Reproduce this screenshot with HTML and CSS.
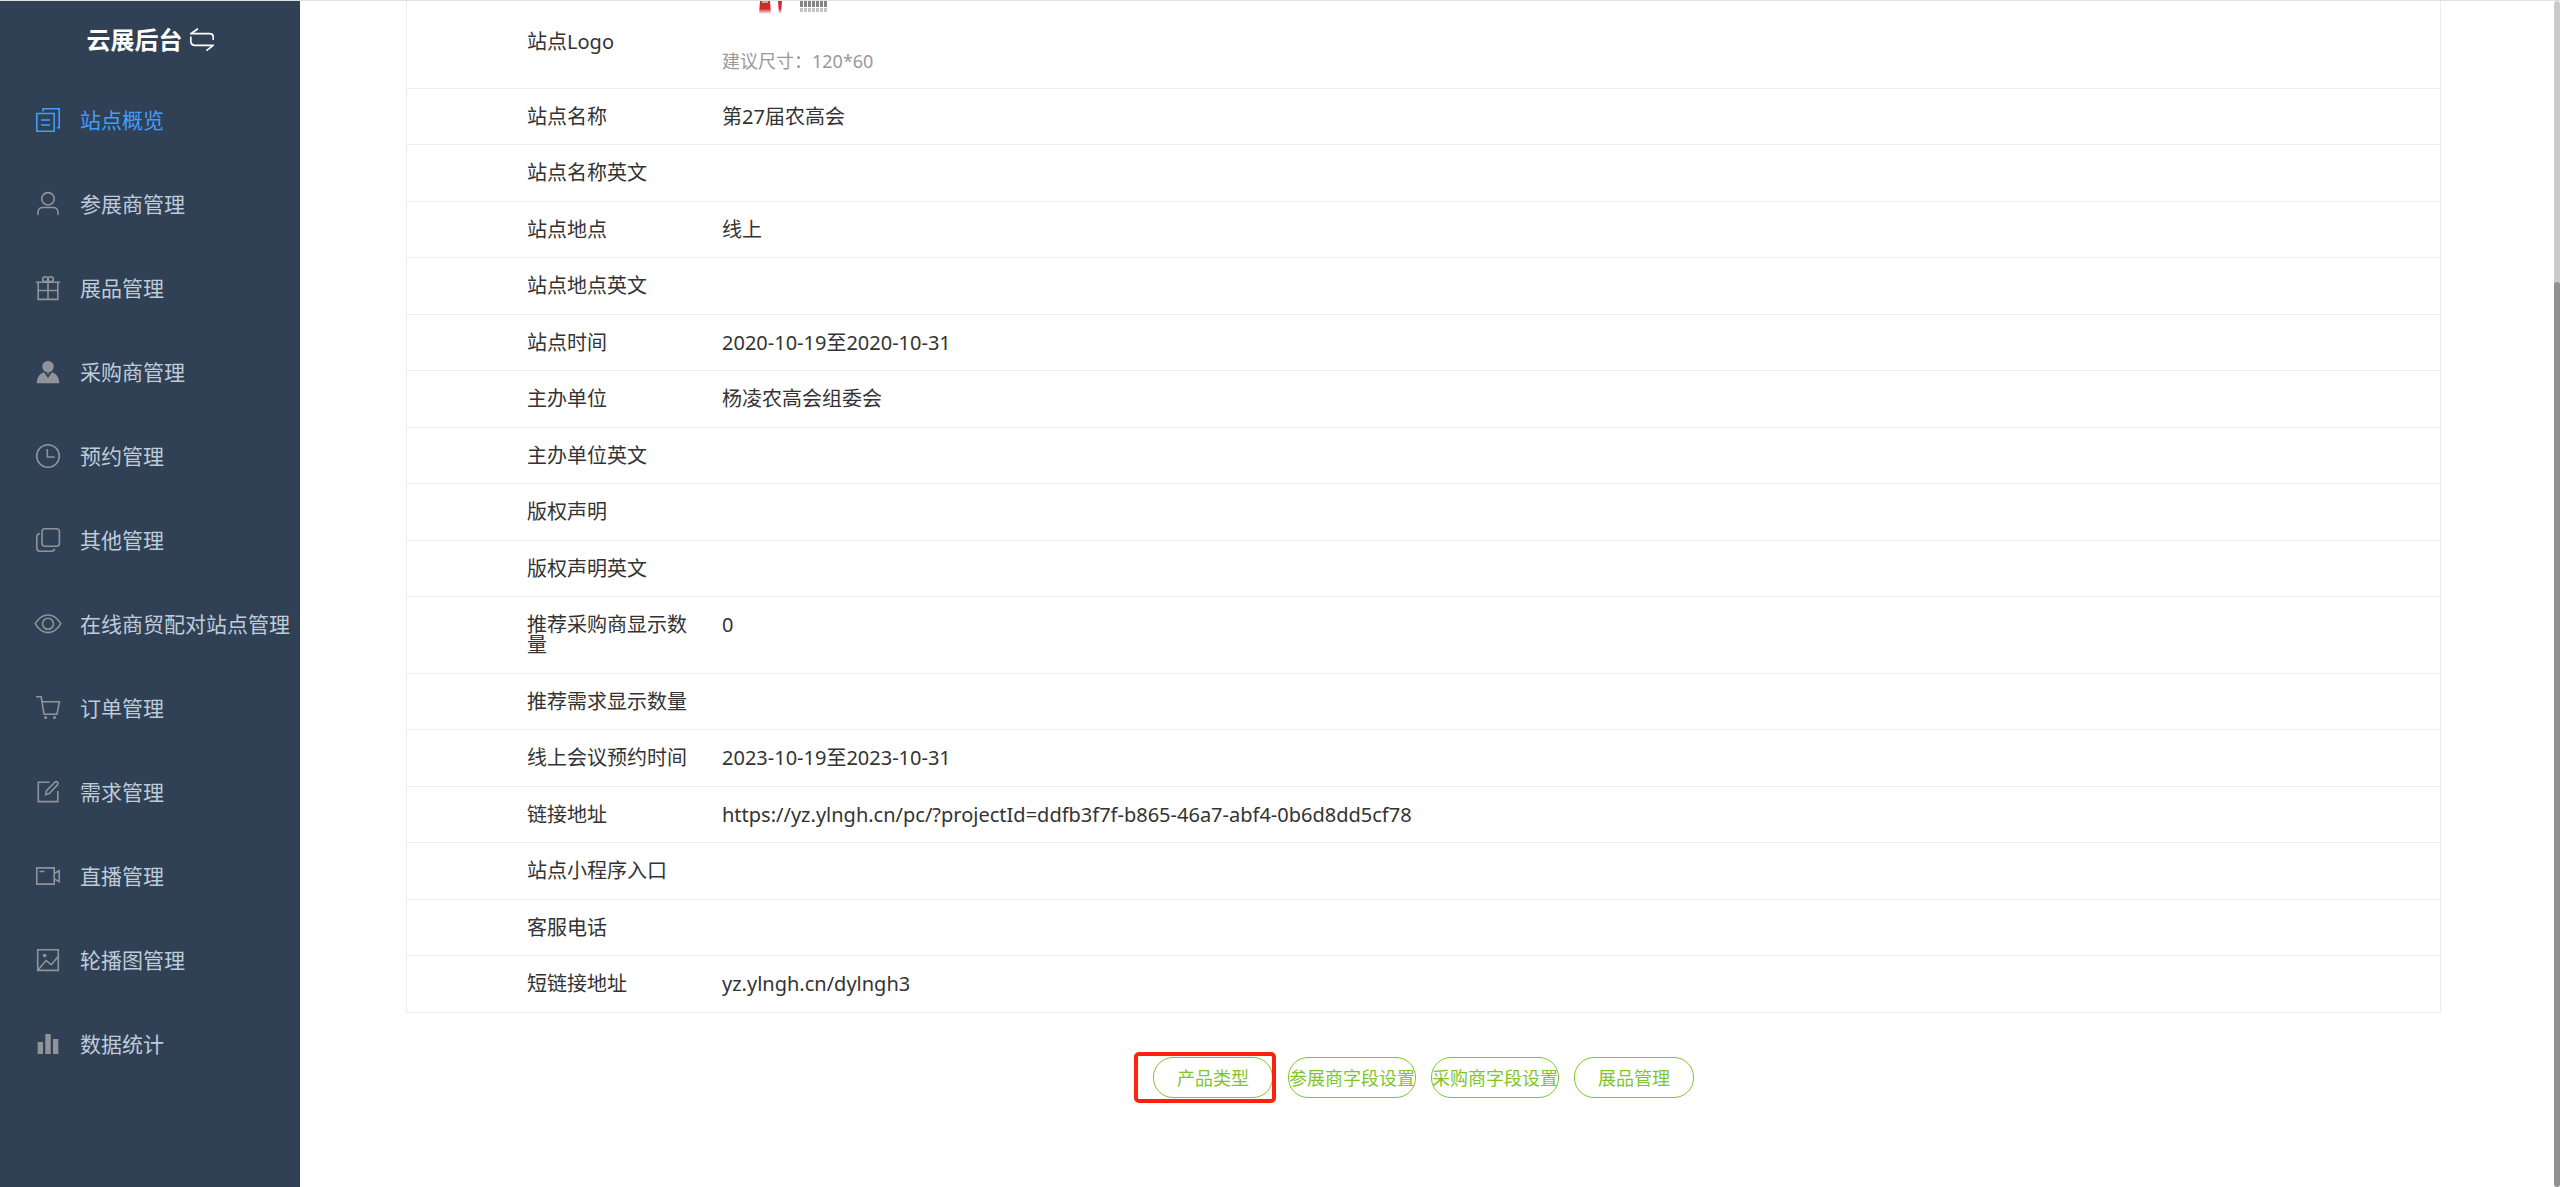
FILE: index.html
```html
<!DOCTYPE html>
<html lang="zh-CN">
<head>
<meta charset="utf-8">
<title>云展后台</title>
<link rel="stylesheet" href="styles.css">
</head>
<body>
<div class="layout">
  <nav class="sidebar" aria-label="主菜单">
    <h1 class="brand">云展后台
      <svg class="brand-icon" viewBox="0 0 24 24" aria-hidden="true"><path d="M8 .8 1 5.6h18.500q3.800 0 3.800 3.800V12M.8 8.500v4.600q0 4.300 4.300 4.300H23l-6.500 5.200"/></svg>
    </h1>
    <ul class="menu">
      <li><a class="menu-item active" href="#"><svg class="icon" viewBox="0 0 28 28"><path d="M2.800 7.500h17.400v17.700H2.800zM9 5.500V2.800h16.200v19H23M7 14h9M7 19h9"/></svg>站点概览</a></li>
      <li><a class="menu-item" href="#"><svg class="icon" viewBox="0 0 28 28"><circle cx="14" cy="8.800" r="6.200"/><path d="M4 25v-2.500q0-5 5-5h10q5 0 5 5V25"/></svg>参展商管理</a></li>
      <li><a class="menu-item" href="#"><svg class="icon" viewBox="0 0 28 28"><path d="M2 8.200h24M4.200 8.200v17.200h19.600V8.200M4.200 16.500h19.600M14 5v20.500"/><circle cx="11.300" cy="5.300" r="2.600"/><circle cx="16.700" cy="5.300" r="2.600"/></svg>展品管理</a></li>
      <li><a class="menu-item" href="#"><svg class="icon solid" viewBox="0 0 28 28"><circle cx="14" cy="8.600" r="5.700"/><path d="M10 14.300 14 20l4-5.700q7.300 2.500 7.300 10.900H2.700Q2.700 16.800 10 14.300zM12.500 14.800h3l-1.500 2z"/></svg>采购商管理</a></li>
      <li><a class="menu-item" href="#"><svg class="icon" viewBox="0 0 28 28"><circle cx="14" cy="14" r="11.300"/><path d="M13.300 7v8h7.500"/></svg>预约管理</a></li>
      <li><a class="menu-item" href="#"><svg class="icon" viewBox="0 0 28 28"><rect x="8" y="2.800" width="17.400" height="17.400" rx="3"/><path d="M6 7.800q-3.200 0-3.200 3V22q0 3.200 3.200 3.200h11.500q3 0 3-2.500"/></svg>其他管理</a></li>
      <li><a class="menu-item" href="#"><svg class="icon" viewBox="0 0 28 28"><path d="M1.200 13.700Q6.500 5 14 5t12.800 8.700Q21.500 22.600 14 22.600T1.200 13.700z"/><circle cx="14" cy="13.800" r="5.500"/></svg>在线商贸配对站点管理</a></li>
      <li><a class="menu-item" href="#"><svg class="icon" viewBox="0 0 28 28"><path d="M2 2.800h5.200L10 20.200h13l2.400-12.400H8.200"/><circle class="dot" cx="11.700" cy="23.600" r="1.500"/><circle class="dot" cx="20.500" cy="23.600" r="1.500"/></svg>订单管理</a></li>
      <li><a class="menu-item" href="#"><svg class="icon" viewBox="0 0 28 28"><path d="M15.500 4.200H4.300v19.400h19.500V13M11.700 16.700l.8-4L20.800 4.200q1.300-1.200 2.600 0t0 2.700L15.500 15.400z"/></svg>需求管理</a></li>
      <li><a class="menu-item" href="#"><svg class="icon" viewBox="0 0 28 28"><path d="M2.800 5.900h17.400v16.200H2.800zM5.500 9.500h5M20.200 11.500l5-2.800v11l-5-2.800"/></svg>直播管理</a></li>
      <li><a class="menu-item" href="#"><svg class="icon" viewBox="0 0 28 28"><path d="M3.700 3.800h20.600v20.600H3.700zM4.500 23.500l7.500-9 5.200 4.200 7-8.200"/><circle class="dot" cx="10.700" cy="9.600" r="1.800"/></svg>轮播图管理</a></li>
      <li><a class="menu-item" href="#"><svg class="icon solid" viewBox="0 0 28 28"><path d="M3.700 12H9v12H3.700zM11.300 4h5.400v20h-5.400zM19 9h5.300v15H19z"/></svg>数据统计</a></li>
    </ul>
  </nav>

  <main class="content">
    <table class="details">
      <tbody>
        <tr class="logo-row"><th scope="row">站点Logo</th><td>
          <svg class="site-logo" viewBox="0 0 120 50" role="img" aria-label="站点Logo">
            <defs>
              <linearGradient id="fade-red" x2="0" y2="1"><stop offset=".6" stop-color="#cf2b2f"/><stop offset="1" stop-color="#cf2b2f" stop-opacity="0"/></linearGradient>
            </defs>
            <path fill="url(#fade-red)" d="M38 0h10l1 13H37zM56 0h4l-1 13h-2z"/>
            <path fill="none" stroke="#e79a9c" stroke-width="2" d="M40 1h6"/>
            <path fill="none" stroke="#858585" stroke-width="6" stroke-dasharray="3 1" d="M78 3h28"/>
            <path fill="none" stroke="#c4c4c4" stroke-width="4" stroke-dasharray="3 1" d="M78 9h28"/>
          </svg>
          <p class="hint">建议尺寸：120*60</p>
        </td></tr>
        <tr><th scope="row">站点名称</th><td>第27届农高会</td></tr>
        <tr><th scope="row">站点名称英文</th><td></td></tr>
        <tr><th scope="row">站点地点</th><td>线上</td></tr>
        <tr><th scope="row">站点地点英文</th><td></td></tr>
        <tr><th scope="row">站点时间</th><td>2020-10-19至2020-10-31</td></tr>
        <tr><th scope="row">主办单位</th><td>杨凌农高会组委会</td></tr>
        <tr><th scope="row">主办单位英文</th><td></td></tr>
        <tr><th scope="row">版权声明</th><td></td></tr>
        <tr><th scope="row">版权声明英文</th><td></td></tr>
        <tr><th scope="row">推荐采购商显示数量</th><td>0</td></tr>
        <tr><th scope="row">推荐需求显示数量</th><td></td></tr>
        <tr><th scope="row">线上会议预约时间</th><td>2023-10-19至2023-10-31</td></tr>
        <tr><th scope="row">链接地址</th><td>https://yz.ylngh.cn/pc/?projectId=ddfb3f7f-b865-46a7-abf4-0b6d8dd5cf78</td></tr>
        <tr><th scope="row">站点小程序入口</th><td></td></tr>
        <tr><th scope="row">客服电话</th><td></td></tr>
        <tr><th scope="row">短链接地址</th><td>yz.ylngh.cn/dylngh3</td></tr>
      </tbody>
    </table>
    <div class="actions">
      <div class="marked"><button class="pill" type="button">产品类型</button></div>
      <button class="pill" type="button">参展商字段设置</button>
      <button class="pill" type="button">采购商字段设置</button>
      <button class="pill" type="button">展品管理</button>
    </div>
  </main>

  <div class="scroll-track" aria-hidden="true"><div class="scroll-thumb"></div></div>
</div>
</body>
</html>
```
FILE: styles.css
```css
* {
  box-sizing: border-box;
}

body {
  margin: 0;
  border-top: 1px solid #dfe1df;
  background: #fff;
  color: #333;
  font-family: "Noto Sans", "Noto Sans CJK SC", sans-serif;
  font-size: 20px;
  line-height: 20px;
}

.layout {
  display: grid;
  grid-template-columns: 300px minmax(0, 1fr) 6px;
  min-height: calc(100vh - 1px);
}

/* Sidebar */
.sidebar {
  background: #304156;
}

.brand {
  display: flex;
  align-items: center;
  justify-content: center;
  gap: 7px;
  height: 77px;
  margin: 0;
  color: #fff;
  font-size: 24px;
  font-weight: 700;
  line-height: 24px;
}

.brand-icon {
  width: 24px;
  height: 24px;
  fill: none;
  stroke: currentColor;
  stroke-width: 1.7;
}

.menu {
  margin: 0;
  padding: 0;
  list-style: none;
}

.menu-item {
  display: flex;
  align-items: center;
  gap: 18px;
  height: 84px;
  padding-left: 34px;
  color: #bfcbd9;
  font-size: 21px;
  text-decoration: none;
  white-space: nowrap;
}

.icon {
  flex: none;
  width: 28px;
  height: 28px;
  fill: none;
  stroke: #909399;
  stroke-width: 1.6;
}

.icon.solid,
.icon .dot {
  fill: #909399;
  stroke: none;
}

.menu-item.active {
  color: #409eff;
}

.active .icon {
  stroke: #409eff;
}

/* Site details */
.content {
  padding: 0 113px 48px 106px;
}

.details {
  width: 100%;
  border: solid #ebeef0;
  border-width: 0 1px;
  border-spacing: 0;
  table-layout: fixed;
}

.details th,
.details td {
  padding: 18px 0 17px;
  border-bottom: 1px solid #ebeef0;
  font-weight: 400;
  text-align: left;
  vertical-align: top;
}

.details th {
  width: 315px;
  padding-left: 120px;
  padding-right: 25px;
}

.details tr:nth-child(odd) th {
  padding-bottom: 18px;
}

.details .logo-row th {
  padding-top: 31px;
}

.details .logo-row td {
  padding-top: 0;
}

.site-logo {
  display: block;
  width: 120px;
  height: 50px;
}

.hint {
  margin: 0;
  color: #999;
  font-size: 18px;
}

/* Action buttons */
.actions {
  display: flex;
  justify-content: center;
  gap: 15px;
  margin-top: 44px;
}

.pill {
  min-width: 120px;
  height: 41px;
  padding: 0;
  border: 1px solid #7ec62c;
  border-radius: 20px;
  background: #fff;
  color: #7ec62c;
  font: inherit;
  font-size: 18px;
}

.marked {
  position: relative;
}

.marked::after {
  content: "";
  position: absolute;
  inset: -5px -3px -5px -19px;
  border: 4px solid #ff2010;
  border-radius: 5px;
  pointer-events: none;
}

/* Scroll indicator */
.scroll-track {
  display: flex;
  padding-top: 281px;
  border-radius: 3px;
  background: #cbcbcb;
}

.scroll-thumb {
  flex: 1;
  border-radius: 3px;
  background: #919191;
}
```
